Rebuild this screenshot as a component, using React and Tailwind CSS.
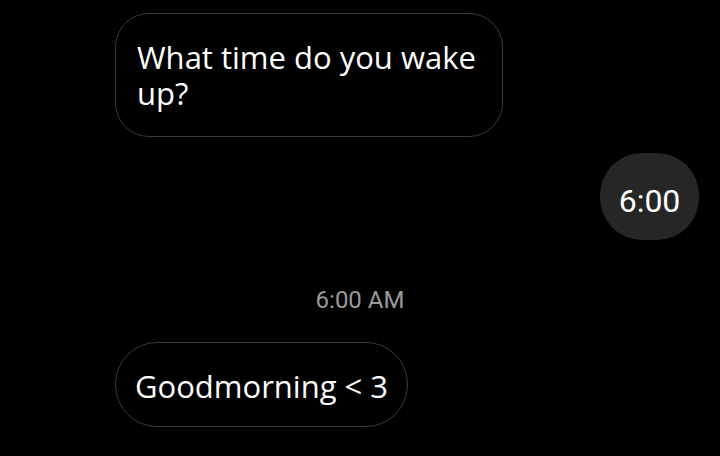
import React from "react";

export default function App() {
  return (
    <div className="w-[720px] h-[456px] bg-black overflow-hidden flex flex-col">
      {/* incoming question */}
      <div className="pl-[115px] pt-[13px]">
        <div className="w-[388px] h-[124px] rounded-[34px] border border-[#3a3a3a] pl-[21px] pr-4 pt-[25px] text-white text-[31px] leading-[36px] font-['Open_Sans',sans-serif]">
          What time do you wake up?
        </div>
      </div>

      {/* outgoing reply */}
      <div className="flex justify-end pr-[21px] mt-4">
        <div className="w-[99px] h-[87px] rounded-[42px] bg-[#262626] flex items-center justify-center pt-[8px] text-white text-[32px] font-['Roboto',sans-serif]">
          6:00
        </div>
      </div>

      {/* timestamp */}
      <div className="mt-[44px] text-center text-[24px] leading-[32px] text-[#9a9a9a] font-['Roboto',sans-serif]">
        6:00 AM
      </div>

      {/* incoming greeting */}
      <div className="pl-[115px] mt-[26px]">
        <div className="inline-flex items-center h-[85px] rounded-[42px] border border-[#3a3a3a] px-[19px] pt-[4px] text-white text-[31px] font-['Open_Sans',sans-serif]">
          Goodmorning &lt; 3
        </div>
      </div>
    </div>
  );
}
